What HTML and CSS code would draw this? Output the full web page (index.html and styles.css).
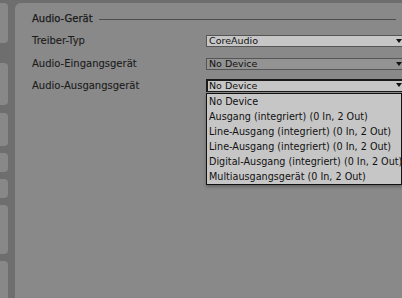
FILE: index.html
```html
<!DOCTYPE html>
<html>
<head>
  <link rel="stylesheet" href="styles.css">
</head>
<body>
  <div class="app">
    <div class="sidebar">
      <div class="tab tab-a"></div>
      <div class="tab tab-b"></div>
      <div class="tab tab-c"></div>
      <div class="tab tab-d"></div>
      <div class="tab tab-d"></div>
      <div class="tab tab-e"></div>
      <div class="tab tab-f"></div>
    </div>
    <div class="main">
      <div class="section-head">
        <span>Audio-Gerät</span>
        <div class="rule"></div>
      </div>

      <div class="field field-first">
        <div class="label">Treiber-Typ</div>
        <div class="select select-light">CoreAudio<span class="arrow"></span></div>
      </div>

      <div class="field">
        <div class="label">Audio-Eingangsgerät</div>
        <div class="select">No Device<span class="arrow"></span></div>
      </div>

      <div class="field">
        <div class="label">Audio-Ausgangsgerät</div>
        <div class="select select-light select-open">No Device<span class="arrow"></span>
          <!-- aufgeklappte Liste -->
          <ul class="menu">
            <li>No Device</li>
            <li>Ausgang (integriert) (0 In, 2 Out)</li>
            <li>Line-Ausgang (integriert) (0 In, 2 Out)</li>
            <li>Line-Ausgang (integriert) (0 In, 2 Out)</li>
            <li>Digital-Ausgang (integriert) (0 In, 2 Out)</li>
            <li>Multiausgangsgerät (0 In, 2 Out)</li>
          </ul>
        </div>
      </div>
    </div>
  </div>
</body>
</html>
```

FILE: styles.css
```css
html, body {
  margin: 0;
  height: 100%;
  background-color: #6e6e6e;
  font-family: "DejaVu Sans", sans-serif;
  color: #1b1b1b;
  overflow: hidden;
}

.app {
  display: flex;
  height: 100%;
}

.sidebar {
  width: 8px;
  padding-top: 3px;
  display: flex;
  flex-direction: column;
  gap: 7px;
}

.tab {
  background-color: #888888;
  border-radius: 0 4px 4px 0;
}
.tab-a { height: 40px; margin-bottom: 13px; }
.tab-b { height: 42px; margin-bottom: 1px; }
.tab-c { height: 33px; }
.tab-d { height: 19px; }
.tab-e { height: 49px; }
.tab-f { flex: 1; border-radius: 0 4px 0 0; }

.main {
  flex: 1;
  margin: 3px 0 0 7px;
  padding: 10px 0 0 17px;
  background-color: #898989;
  border-radius: 6px 0 0 0;
  overflow: hidden;
}

.section-head {
  display: flex;
  align-items: center;
  gap: 6px;
  font-size: 10px;
  line-height: 12px;
  margin-bottom: 10px;
}
.section-head span {
  -webkit-text-stroke: 0.25px #1b1b1b;
}
.rule {
  flex: 1;
  height: 1px;
  background-color: #4d4d4d;
  margin-right: 6px;
}

.field {
  display: grid;
  grid-template-columns: 174px 1fr;
  height: 12px;
  margin-bottom: 10px;
}
.field-first {
  margin-bottom: 11px;
}

.label {
  font-size: 10px;
  line-height: 12px;
  -webkit-text-stroke: 0.1px #1b1b1b;
}

.select {
  position: relative;
  box-sizing: border-box;
  height: 12px;
  margin-right: -4px;
  padding-left: 2px;
  border: 1px solid #555555;
  background-color: #939393;
  font-size: 9.5px;
  line-height: 10px;
  color: #111111;
}
.select-light {
  background-color: #c6c6c6;
}
.select-open {
  height: 13px;
  margin-top: -1px;
  border-color: #1a1a1a;
  border-top-width: 2px;
  border-left-width: 2px;
  padding-left: 1px;
  line-height: 10px;
}

.arrow {
  position: absolute;
  right: 3px;
  top: 3px;
  border-left: 3.5px solid transparent;
  border-right: 3.5px solid transparent;
  border-top: 4px solid #111111;
}
.select-open .arrow {
  top: 2px;
}

.menu {
  position: absolute;
  left: -2px;
  top: 12px;
  right: 3px;
  margin: 0;
  padding: 0 0 0 2px;
  list-style: none;
  background-color: #c6c6c6;
  border: 1px solid #111111;
  box-shadow: 0 2px 3px rgba(0, 0, 0, 0.25);
}
.menu li {
  height: 15px;
  line-height: 15px;
  font-size: 9.65px;
  white-space: nowrap;
  overflow: hidden;
}
```
